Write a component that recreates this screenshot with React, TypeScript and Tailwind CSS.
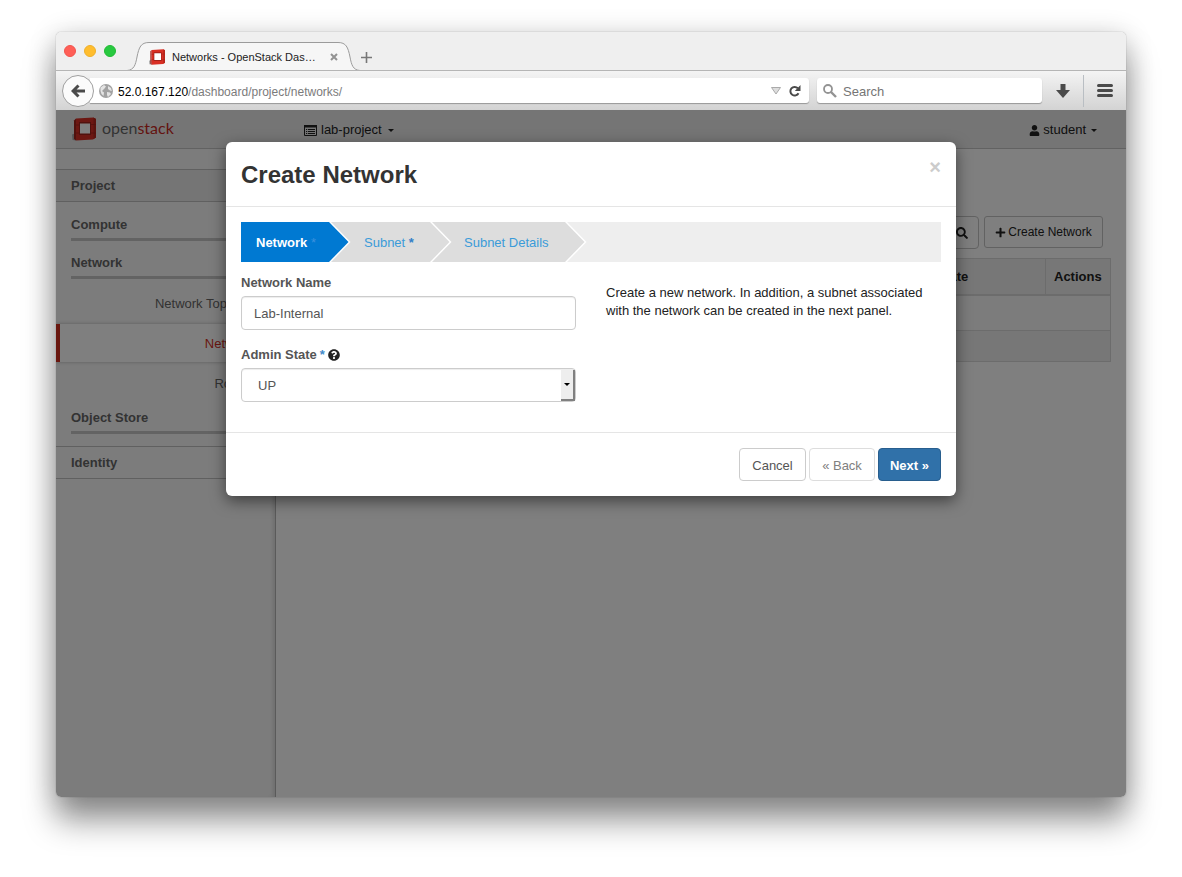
import React, { useState } from 'react';
import { FaPlus, FaQuestionCircle, FaSearch, FaUser } from 'react-icons/fa';

function CubeLogo({ className }: { className: string }) {
  return (
    <svg viewBox="0 0 24 24" className={className} aria-hidden="true">
      <path d="M0 17.500l4-1.500v7.500l-3.500-.5z" fill="#aaa" />
      <path d="M2 3.500L4 1.500v22l-2-1.500z" fill="#a3221a" />
      <path d="M4 1.500L21.500.5 24 2v18.500L21 22.500 4 23.500z" fill="#d92f24" />
      <path d="M21.500.5L24 2v18.500L21.500 22z" fill="#b8261c" />
      <path d="M4 8h3.500M4 16h3.500M19 7.500h5M19 16h5" stroke="#a3221a" strokeWidth=".8" />
      <path d="M7 5h12v13H7z" fill="#a3221a" />
      <path d="M8 6.500h10v10H8z" fill="#fff" />
    </svg>
  );
}

function Caret() {
  return (
    <svg viewBox="0 0 6 3" className="h-[3px] w-1.5" aria-hidden="true">
      <path d="M0 0h6L3 3z" fill="currentColor" />
    </svg>
  );
}

function TabStrip() {
  return (
    <div className="flex h-[38px] items-end bg-[#efefef] pl-2">
      <div className="flex gap-2 self-start pt-[13px]">
        <button aria-label="Close window" className="size-3 rounded-full border border-[#f2544d] bg-[#ff5f57]" />
        <button aria-label="Minimize window" className="size-3 rounded-full border border-[#efb02a] bg-[#ffbd2e]" />
        <button aria-label="Zoom window" className="size-3 rounded-full border border-[#22bb35] bg-[#28c940]" />
      </div>
      <div className="-mb-px ml-[11px] flex h-[29px] items-stretch">
        <svg viewBox="0 0 22 29" className="h-[29px] w-[22px]" aria-hidden="true">
          <path d="M0 28.500C7 28 8.500 23 10 15C12 5 14 .5 22 .5V29H0z" fill="#f6f6f6" />
          <path d="M0 28.500C7 28 8.500 23 10 15C12 5 14 .5 22 .5" fill="none" stroke="#9b9b9b" />
        </svg>
        <div className="flex w-[189px] items-center border-t border-[#9b9b9b] bg-[#f6f6f6]">
          <CubeLogo className="size-4" />
          <span className="ml-[7px] flex-1 whitespace-nowrap text-[11px] text-[#222]">Networks - OpenStack Das…</span>
          <button aria-label="Close tab" className="-mr-1 p-1 text-[#929292]">
            <svg viewBox="0 0 8 8" className="size-2" aria-hidden="true">
              <path d="M1 1l6 6M7 1L1 7" stroke="currentColor" strokeWidth="2" />
            </svg>
          </button>
        </div>
        <svg viewBox="0 0 22 29" className="h-[29px] w-[22px]" aria-hidden="true">
          <path d="M22 28.500C15 28 13.500 23 12 15C10 5 8 .5 0 .5V29H22z" fill="#f6f6f6" />
          <path d="M22 28.500C15 28 13.500 23 12 15C10 5 8 .5 0 .5" fill="none" stroke="#9b9b9b" />
        </svg>
        <button aria-label="New tab" className="self-center px-px pt-0.5 text-[#777]">
          <svg viewBox="0 0 11 11" className="size-[11px]" aria-hidden="true">
            <path d="M5.500 0v11M0 5.500h11" stroke="currentColor" strokeWidth="1.600" />
          </svg>
        </button>
      </div>
    </div>
  );
}

function Toolbar() {
  return (
    <div className="flex h-10 items-center border-t border-[#b5b5b5] bg-linear-to-b from-[#f4f4f4] to-[#d3d3d3] pl-1.5">
      <button aria-label="Back" className="z-10 flex size-8 shrink-0 items-center justify-center rounded-full border border-[#a0a0a0] bg-[#fbfbfb] text-[#4a4a4a]">
        <svg viewBox="0 0 14 14" className="size-3.5" aria-hidden="true">
          <path d="M7.500 1.500L2 7l5.500 5.500M2.500 7H14" fill="none" stroke="currentColor" strokeWidth="3" />
        </svg>
      </button>
      <div className="-ml-1 flex h-[25px] flex-1 items-center rounded-r-[3px] bg-white pl-[9px] pr-2 pt-px shadow-[0_1px_1px_rgba(0,0,0,0.3)]">
        <svg viewBox="0 0 14 14" className="size-3.5 shrink-0" aria-hidden="true">
          <circle cx="7" cy="7" r="7" fill="#a2a2a2" />
          <path d="M1.500 3.500L5 1l2 1.500-1.500 2L3 7l2 1.500L4.500 12 2.500 10 1.500 7zM9 2l3 2 .8 3L11 6.500 9 5zM8 8l3 .5 1 1.500-3 3-1-2z" fill="#e4e4e4" />
        </svg>
        <div className="ml-[5px] flex-1 pt-px text-xs text-[#7b7b7b]">
          <span className="text-black">52.0.167.120</span>/dashboard/project/networks/
        </div>
        <svg viewBox="0 0 10 8" className="mr-2 h-2 w-2.5" aria-hidden="true">
          <path d="M.5.5h9L5 7z" fill="#ddd" stroke="#aaa" />
        </svg>
        <button aria-label="Reload" className="text-[#4a4a4a]">
          <svg viewBox="0 0 12 12" className="size-3" aria-hidden="true">
            <path d="M9.500 8.200A4.300 4.300 0 1 1 8.800 3.200" fill="none" stroke="currentColor" strokeWidth="2" />
            <path d="M11.500 0v6H5.800z" fill="currentColor" />
          </svg>
        </button>
      </div>
      <label className="ml-2 flex h-[25px] w-[225px] items-center gap-1.5 rounded-[3px] bg-white pl-1.5 shadow-[0_1px_1px_rgba(0,0,0,0.3)]">
        <svg viewBox="0 0 14 14" className="size-3.5 shrink-0" aria-hidden="true">
          <circle cx="5" cy="5" r="4" fill="none" stroke="#939393" strokeWidth="1.800" />
          <path d="M8 8l5 5" stroke="#939393" strokeWidth="2.400" />
        </svg>
        <input aria-label="Search" placeholder="Search" className="w-full min-w-0 pt-0.5 text-[13px] outline-none placeholder:text-[#757575]" />
      </label>
      <button aria-label="Downloads" className="flex w-[41px] justify-center text-[#4a4a4a]">
        <svg viewBox="0 0 14 14" className="size-3.5" aria-hidden="true">
          <path d="M4.500 0h5v6H14l-7 8-7-8h4.500z" fill="currentColor" />
        </svg>
      </button>
      <div className="h-8 w-px bg-[#b9bec3]" />
      <button aria-label="Menu" className="px-[13px] text-[#4a4a4a]">
        <svg viewBox="0 0 16 13" className="h-[13px] w-4" aria-hidden="true">
          <path d="M1.500 1.500h13M1.500 6.500h13M1.500 11.500h13" stroke="currentColor" strokeWidth="3" strokeLinecap="round" />
        </svg>
      </button>
    </div>
  );
}

function AppHeader() {
  return (
    <header className="flex h-[39px] items-center border-b border-[#c4c4c4] bg-[#ebebeb] pl-4 pr-[29px] text-[13px] text-[#222]">
      <a href="#home" className="flex w-[232px] items-center gap-1.5">
        <CubeLogo className="size-6" />
        <span className="pb-0.5 font-[Lato,sans-serif] text-[16px] leading-6 text-[#666]">
          open<span className="text-[#c8281e]">stack</span>
        </span>
      </a>
      <button className="flex items-center gap-1 pt-0.5">
        <svg viewBox="0 0 13 11" className="h-[11px] w-[13px]" aria-hidden="true">
          <path d="M.5 1h12v9.500H.5z" fill="none" stroke="currentColor" />
          <path d="M0 0h13v2.500H0zM2 4h1.200v1H2zM4 4h7v1H4zM2 6h1.200v1H2zM4 6h7v1H4zM2 8h1.200v1H2zM4 8h7v1H4z" fill="currentColor" />
        </svg>
        <span className="pr-0.5">lab-project</span>
        <Caret />
      </button>
      <button className="ml-auto flex items-center gap-[3px] pt-0.5">
        <FaUser className="size-[11px]" />
        <span className="pr-0.5">student</span>
        <Caret />
      </button>
    </header>
  );
}

function SidebarSection({ label, first = true }: { label: string; first?: boolean }) {
  return (
    <a href="#section" className={`ml-[15px] block border-b-[3px] border-[#c6c6c6] pb-1 font-bold ${first ? 'pt-[13px]' : 'pt-[5px]'}`}>
      {label}
    </a>
  );
}

function Sidebar() {
  return (
    <nav className="w-[220px] shrink-0 border-r border-[#b4b4b4] bg-[#f9f9f9] pt-5 text-[13px] leading-[18px] text-[#666] shadow-[inset_-4px_0_4px_-2px_rgba(0,0,0,0.12)]">
      <a href="#project" className="mb-px block border-y border-[#c0c0c0] bg-[#ebebeb] py-[7px] pl-[15px] font-bold leading-[17px]">Project</a>
      <SidebarSection label="Compute" />
      <SidebarSection label="Network" />
      <ul className="pt-[5px] text-right leading-10">
        <li><a href="#topology" className="block h-10 pr-[17px]">Network Topology</a></li>
        <li>
          <a href="#networks" className="mb-0.5 block h-[38px] border-l-4 border-[#d32f1e] bg-white pr-4 text-[#d32f1e] shadow-[0_0_4px_rgba(0,0,0,0.25)]">Networks</a>
        </li>
        <li><a href="#routers" className="block h-10 pr-[15px]">Routers</a></li>
      </ul>
      <SidebarSection label="Object Store" first={false} />
      <a href="#identity" className="mt-3 block border-y border-[#c0c0c0] py-[7px] pl-[15px] font-bold leading-[17px]">Identity</a>
    </nav>
  );
}

function NetworksPage() {
  return (
    <main className="flex-1 bg-white pl-[15px] pr-[15px] pt-[67px] text-[13px] text-[#222]">
      <div className="flex h-[42px] items-start justify-end gap-[5px] pr-2">
        <button aria-label="Filter" className="flex h-[33px] w-9 items-center justify-center rounded-r border border-[#c4c4c4] pl-0.5">
          <FaSearch className="size-3" />
        </button>
        <button className="flex h-8 w-[119px] items-center justify-center gap-0.5 rounded-[3px] border border-[#c4c4c4] text-xs">
          <FaPlus className="size-[11px]" />
          Create Network
        </button>
      </div>
      <table className="w-full border border-[#d8d8d8]">
        <thead>
          <tr className="h-9 border-b-2 border-[#d8d8d8] bg-[#eee] text-left">
            <th />
            <th className="w-[161px] pl-2">Admin State</th>
            <th className="w-[65px] border-l border-[#d8d8d8] pl-2">Actions</th>
          </tr>
        </thead>
        <tbody>
          <tr className="h-9 bg-[#f9f9f9]"><td colSpan={3} /></tr>
        </tbody>
        <tfoot>
          <tr className="h-[31px] border-t border-[#d8d8d8] bg-[#eee]"><td colSpan={3} /></tr>
        </tfoot>
      </table>
    </main>
  );
}

function StepArrow({ className }: { className: string }) {
  return (
    <svg viewBox="0 0 22 40" className={`absolute left-full top-0 z-10 h-10 w-[22px] ${className}`} aria-hidden="true">
      <path d="M0 0h2l19.500 20L2 40H0z" fill="#fff" />
      <path d="M0 0l19.500 20L0 40z" fill="currentColor" />
    </svg>
  );
}

function CreateNetworkDialog() {
  const [name, setName] = useState('Lab-Internal');
  return (
    <section role="dialog" aria-labelledby="dialog-title" className="w-[730px] rounded-md bg-white text-[13px] leading-[18px] shadow-[0_5px_15px_rgba(0,0,0,0.5)]">
      <div className="flex items-start justify-between border-b border-[#e5e5e5] px-[15px] py-4">
        <h1 id="dialog-title" className="h-8 text-2xl font-bold leading-[34px] text-[#333]">Create Network</h1>
        <button aria-label="Close" className="text-[20px] font-bold leading-[18px] text-[#ccc]">×</button>
      </div>
      <div className="px-[15px] pb-[30px] pt-[15px]">
        <ol className="flex h-10 bg-[#eee] leading-[42px] text-[#3a9bd9]">
          <li className="relative w-[88px] bg-[#0079d2]">
            <a href="#network" className="block h-10 pl-[15px] font-bold text-white">Network <span className="font-normal text-[#3c90dd]">*</span></a>
            <StepArrow className="text-[#0079d2]" />
          </li>
          <li className="relative w-[101px] bg-[#ddd]">
            <a href="#subnet" className="block h-10 pl-[35px]">Subnet <span className="font-bold text-[#3280c8]">*</span></a>
            <StepArrow className="text-[#ddd]" />
          </li>
          <li className="relative w-[135px] bg-[#ddd]">
            <a href="#details" className="block h-10 whitespace-nowrap pl-[34px]">Subnet Details</a>
            <StepArrow className="text-[#ddd]" />
          </li>
        </ol>
        <div className="grid grid-cols-2 gap-[30px] pt-3">
          <form className="text-[#555]">
            <label htmlFor="net-name" className="block font-bold">Network Name</label>
            <input
              id="net-name"
              value={name}
              onChange={(e) => setName(e.target.value)}
              className="mt-1 block h-[34px] w-full rounded border border-[#ccc] px-3 shadow-[inset_0_1px_1px_rgba(0,0,0,0.075)]"
            />
            <label htmlFor="admin-state" className="mt-4 flex items-center gap-[3px] font-bold">
              Admin State <span className="text-[#428bca]">*</span>
              <FaQuestionCircle className="size-3 text-[#222]" />
            </label>
            <div className="relative mt-1">
              <select id="admin-state" className="block h-[34px] w-full appearance-none rounded border border-[#ccc] bg-white px-4 pt-0.5 shadow-[inset_0_1px_1px_rgba(0,0,0,0.075)]">
                <option>UP</option>
                <option>DOWN</option>
              </select>
              <span className="pointer-events-none absolute bottom-px right-px top-0.5 flex w-3.5 items-center justify-center border-b-2 border-r-2 border-[#808080] bg-[#eee] text-black">
                <Caret />
              </span>
            </div>
          </form>
          <p className="pt-[10px] text-[#222]">
            Create a new network. In addition, a subnet associated with the network can be created in the next panel.
          </p>
        </div>
      </div>
      <div className="flex justify-end gap-[3px] border-t border-[#e5e5e5] p-[15px]">
        <button className="h-[33px] w-[67px] rounded border border-[#ccc] pt-0.5 text-[#555]">Cancel</button>
        <button className="h-[33px] w-[66px] rounded border border-[#ddd] pt-0.5 text-[#808080]">« Back</button>
        <button className="h-[33px] w-[63px] rounded border border-[#285e8e] bg-[#3071a9] pt-0.5 font-bold text-white">Next »</button>
      </div>
    </section>
  );
}

export default function App() {
  return (
    <div className="flex min-h-screen flex-col bg-white px-14 pb-20 pt-8 font-['Liberation_Sans',Arial,sans-serif]">
      <div className="flex flex-1 flex-col overflow-hidden rounded-[5px] shadow-[0_0_1px_rgba(0,0,0,0.5),0_24px_32px_rgba(0,0,0,0.4),0_4px_28px_rgba(0,0,0,0.2)]">
        <TabStrip />
        <Toolbar />
        <div className="relative flex flex-1 flex-col">
          <AppHeader />
          <div className="flex flex-1">
            <Sidebar />
            <NetworksPage />
          </div>
          <div className="absolute inset-0 z-20 flex items-start justify-center bg-black/50 pt-8">
            <CreateNetworkDialog />
          </div>
        </div>
      </div>
    </div>
  );
}
